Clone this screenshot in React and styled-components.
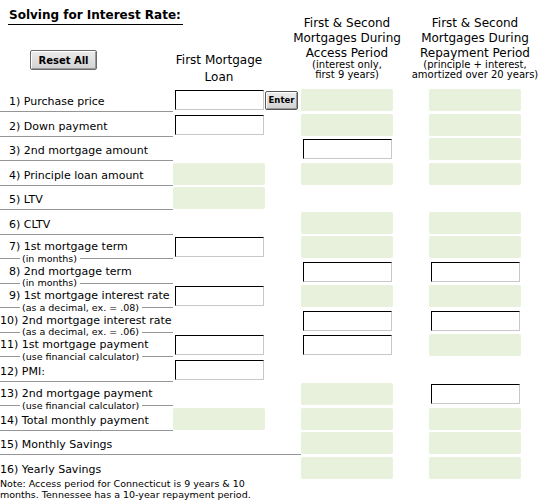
import React from 'react';
import styled, { createGlobalStyle } from 'styled-components';

const GlobalStyle = createGlobalStyle`
  body {
    margin: 0;
    background: #fff;
    color: #000;
    font-family: "DejaVu Sans", Verdana, sans-serif;
  }
`;

const Sheet = styled.div`
  width: 560px;
`;

const Grid = styled.div`
  display: grid;
  grid-template-columns: 173px 92px 36px 92px 36px 92px;
  grid-template-rows: 88px;
  grid-auto-rows: 24.5px;
`;

const TitleCell = styled.div`
  grid-column: 1;
  grid-row: 1;
  display: flex;
  flex-direction: column;
  align-items: flex-start;
  padding: 8px 0 0 8px;
`;

const Title = styled.div`
  font-size: 12px;
  font-weight: bold;
  line-height: 14px;
  padding: 0 2px 2px 1px;
  border-bottom: 1px solid #000;
  white-space: nowrap;
`;

const ResetButton = styled.button`
  margin: 25px 0 0 22px;
  width: 67px;
  height: 20px;
  padding: 0;
  font-family: inherit;
  font-size: 10px;
  font-weight: bold;
  color: #000;
  background: linear-gradient(#ececec, #d2d2d2);
  border: 1px solid #6a6a6a;
  border-radius: 2px;
  box-shadow: inset 1px 1px #fff, inset -1px -1px #9a9a9a;
`;

const HeadCell = styled.div`
  grid-column: ${p => p.$col};
  grid-row: 1;
  display: flex;
  flex-direction: column;
  align-items: center;
  justify-content: flex-end;
  padding-bottom: ${p => p.$pad}px;
  white-space: nowrap;
`;

const HeadLine = styled.div`
  font-size: 12px;
  line-height: ${p => (p.$tall ? 17 : 15)}px;
`;

const HeadSmall = styled.div`
  display: flex;
  flex-direction: column;
  align-items: center;
  margin-top: -1.5px;
  font-size: 10px;
  line-height: 10.5px;
`;

const LabelCell = styled.div`
  grid-column: ${p => (p.$wide ? '1 / span 3' : '1')};
  grid-row: ${p => p.$row};
  display: flex;
  flex-direction: column;
  justify-content: flex-end;
  min-width: 0;
`;

const LabelText = styled.div`
  font-size: 11px;
  line-height: 13px;
  padding-left: ${p => (p.$indent ? 9 : 0)}px;
  margin-bottom: ${p => (p.$sub ? 5 : 3)}px;
  white-space: nowrap;
`;

const Rule = styled.div`
  height: 1px;
  display: flex;
  align-items: center;
  margin-bottom: 0.5px;
  &::before,
  &::after {
    content: '';
    height: 1px;
    background: ${p => (p.$none ? 'transparent' : '#969696')};
  }
  &::before {
    flex: 0 0 ${p => (p.$sub ? '20px' : '0px')};
  }
  &::after {
    flex: 1;
  }
`;

const RuleNote = styled.span`
  font-size: 9.5px;
  line-height: 9px;
  padding: 0 3px 1px 2px;
  white-space: nowrap;
`;

const Cell = styled.div`
  grid-column: ${p => p.$col};
  grid-row: ${p => p.$row};
  display: flex;
  align-items: center;
  justify-content: ${p => (p.$start ? 'flex-start' : 'center')};
`;

const Result = styled.div`
  width: 92px;
  height: 22px;
  background: #e7f1dc;
  border-radius: 2px;
`;

const Field = styled.input`
  box-sizing: border-box;
  width: 89px;
  height: 20px;
  margin: 0;
  padding: 0 2px;
  background: #fff;
  border: 1px solid;
  border-color: #000 #c8c8c8 #c8c8c8 #000;
  font-family: inherit;
  font-size: 11px;
`;

const EnterButton = styled.button`
  width: 33px;
  height: 19px;
  padding: 0;
  font-family: inherit;
  font-size: 8.5px;
  font-weight: bold;
  color: #000;
  background: linear-gradient(#ececec, #d2d2d2);
  border: 1px solid #555;
  border-radius: 2px;
  box-shadow: inset 1px 1px #fff, inset -1px -1px #9a9a9a;
`;

const Note = styled.p`
  width: 265px;
  margin: -2px 0 0;
  font-size: 9.5px;
  line-height: 11px;
`;

// i = input field, o = calculated result, '' = empty
const rows = [
  { label: 'Purchase price', cells: ['i', 'o', 'o'], enter: true },
  { label: 'Down payment', cells: ['i', 'o', 'o'] },
  { label: '2nd mortgage amount', cells: ['', 'i', 'o'] },
  { label: 'Principle loan amount', cells: ['o', 'o', 'o'] },
  { label: 'LTV', cells: ['o', '', ''] },
  { label: 'CLTV', cells: ['', 'o', 'o'] },
  { label: '1st mortgage term', sub: '(in months)', cells: ['i', 'o', 'o'] },
  { label: '2nd mortgage term', sub: '(in months)', cells: ['', 'i', 'i'] },
  { label: '1st mortgage interest rate', sub: '(as a decimal, ex. = .08)', cells: ['i', 'o', 'o'] },
  { label: '2nd mortgage interest rate', sub: '(as a decimal, ex. = .06)', cells: ['', 'i', 'i'] },
  { label: '1st mortgage payment', sub: '(use financial calculator)', cells: ['i', 'i', 'o'] },
  { label: 'PMI:', cells: ['i', '', ''] },
  { label: '2nd mortgage payment', sub: '(use financial calculator)', cells: ['', 'o', 'i'] },
  { label: 'Total monthly payment', cells: ['o', 'o', 'o'] },
  { label: 'Monthly Savings', cells: ['', 'o', 'o'], wide: true },
  { label: 'Yearly Savings', cells: ['', 'o', 'o'], last: true },
];

const columns = [2, 4, 6];

const Row = ({ n, row }) => {
  const line = n + 1;
  return (
    <>
      <LabelCell $wide={row.wide} $row={line}>
        <LabelText $indent={n < 10} $sub={!!row.sub}>
          {n}) {row.label}
        </LabelText>
        <Rule $sub={!!row.sub} $none={row.last}>
          {row.sub && <RuleNote>{row.sub}</RuleNote>}
        </Rule>
      </LabelCell>
      {row.cells.map((kind, i) =>
        kind ? (
          <Cell key={i} $col={columns[i]} $row={line}>
            {kind === 'i' ? <Field type="text" /> : <Result />}
          </Cell>
        ) : null
      )}
      {row.enter && (
        <Cell $col={3} $row={line} $start>
          <EnterButton>Enter</EnterButton>
        </Cell>
      )}
    </>
  );
};

const App = () => (
  <Sheet>
    <GlobalStyle />
    <Grid>
      <TitleCell>
        <Title>Solving for Interest Rate:</Title>
        <ResetButton>Reset All</ResetButton>
      </TitleCell>
      <HeadCell $col={2} $pad={2}>
        <HeadLine $tall>First Mortgage</HeadLine>
        <HeadLine $tall>Loan</HeadLine>
      </HeadCell>
      <HeadCell $col="3 / span 3" $pad={7.5}>
        <HeadLine>First &amp; Second</HeadLine>
        <HeadLine>Mortgages During</HeadLine>
        <HeadLine>Access Period</HeadLine>
        <HeadSmall>
          <span>(interest only,</span>
          <span>first 9 years)</span>
        </HeadSmall>
      </HeadCell>
      <HeadCell $col={6} $pad={7.5}>
        <HeadLine>First &amp; Second</HeadLine>
        <HeadLine>Mortgages During</HeadLine>
        <HeadLine>Repayment Period</HeadLine>
        <HeadSmall>
          <span>(principle + interest,</span>
          <span>amortized over 20 years)</span>
        </HeadSmall>
      </HeadCell>
      {rows.map((row, i) => (
        <Row key={i} n={i + 1} row={row} />
      ))}
    </Grid>
    <Note>
      Note: Access period for Connecticut is 9 years &amp; 10 months. Tennessee has a 10-year
      repayment period.
    </Note>
  </Sheet>
);

export default App;
